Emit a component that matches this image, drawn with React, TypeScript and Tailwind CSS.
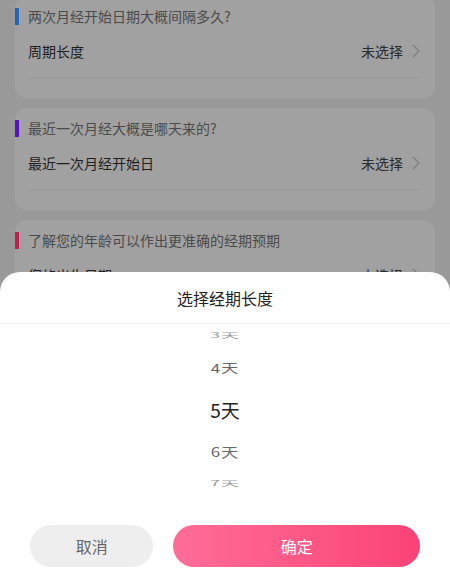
import React from "react";

const font = { fontFamily: '"Noto Sans CJK SC", "Noto Sans", sans-serif' };

function Chevron() {
  return (
    <svg width="8" height="14" viewBox="0 0 8 14" className="ml-[9px]">
      <polyline points="1,1 7,7 1,13" fill="none" stroke="#7c7c7c" strokeWidth="1.2" />
    </svg>
  );
}

function Card({ bar, title, label }: { bar: string; title: string; label: string }) {
  return (
    <div className="bg-[#a1a1a1] rounded-xl pt-3 pb-5 h-[102px] shrink-0">
      <div className="flex items-center h-4">
        <div className={`w-1 h-[17px] ${bar}`} />
        <div className="ml-[9px] text-[14px] leading-4 text-[#4b4b4b]">{title}</div>
      </div>
      <div className="mt-[7px] h-10 flex items-center pl-[13px] pr-[15px]">
        <div className="flex-1 text-[14px] text-[#1e1e1e]">{label}</div>
        <div className="text-[14px] text-[#2a2a2a]">未选择</div>
        <Chevron />
      </div>
      <div className="mt-[6px] mx-[15px] h-px bg-[#979797]" />
    </div>
  );
}

export default function App() {
  return (
    <div className="relative w-[450px] h-[577px] overflow-hidden bg-[#999999]" style={font}>
      <div className="flex flex-col gap-[10px] px-[15px] -mt-1">
        <Card bar="bg-[#2563b8]" title="两次月经开始日期大概间隔多久?" label="周期长度" />
        <Card bar="bg-[#5a14bf]" title="最近一次月经大概是哪天来的?" label="最近一次月经开始日" />
        <Card bar="bg-[#c21f4a]" title="了解您的年龄可以作出更准确的经期预期" label="您的出生日期" />
      </div>

      <div className="absolute left-0 right-0 top-[272px] bottom-0 bg-white rounded-t-[20px] flex flex-col">
        <div className="h-[52px] flex items-center justify-center border-b border-[#f0f0f0] text-[16px] text-[#222]">
          选择经期长度
        </div>
        <div className="flex flex-col items-center">
          <div className="h-[22px] flex items-center overflow-hidden">
            <span className="text-[18px] leading-none text-[#9a9a9a] scale-y-[0.4] tracking-[1px]">3天</span>
          </div>
          <div className="h-[42px] flex items-center">
            <span className="text-[17px] leading-none text-[#666] scale-y-[0.72] tracking-[1px]">4天</span>
          </div>
          <div className="h-[42px] flex items-center">
            <span className="text-[19px] leading-none text-[#222]">5天</span>
          </div>
          <div className="h-[42px] flex items-center">
            <span className="text-[17px] leading-none text-[#666] scale-y-[0.74] tracking-[1px]">6天</span>
          </div>
          <div className="h-[22px] flex items-center overflow-hidden">
            <span className="text-[18px] leading-none text-[#9a9a9a] scale-y-[0.4] tracking-[1px]">7天</span>
          </div>
        </div>
        <div className="mt-[31px] flex gap-5 px-[30px]">
          <button className="flex-1 h-[42px] rounded-full bg-[#eeeeee] text-[16px] text-[#666]">取消</button>
          <button className="flex-[2] h-[42px] rounded-full bg-gradient-to-r from-[#ff6c98] to-[#fb4276] text-[16px] text-white">
            确定
          </button>
        </div>
      </div>
    </div>
  );
}
